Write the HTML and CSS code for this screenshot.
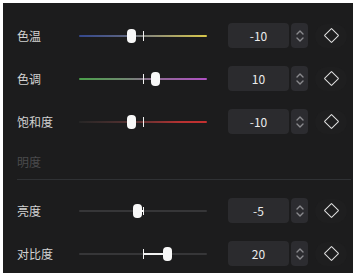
FILE: index.html
```html
<!DOCTYPE html>
<html lang="zh">
<head>
    <meta charset="UTF-8">
    <title>调色</title>
    <link rel="stylesheet" href="styles.css">
</head>
<body>
    <div class="panel">
        <!-- 白平衡 -->
        <div class="row">
            <span class="label">色温</span>
            <div class="slider">
                <div class="track temp"></div>
                <div class="tick"></div>
                <div class="thumb" style="left: 48px"></div>
            </div>
            <div class="value">-10</div>
            <div class="stepper">
                <svg width="10" height="16" viewBox="0 0 10 16"><path d="M2 6 L5 3 L8 6 M2 10 L5 13 L8 10" fill="none" stroke="#8a8a8e" stroke-width="1.4" stroke-linecap="round" stroke-linejoin="round"/></svg>
            </div>
            <div class="key"><span class="diamond"></span></div>
        </div>

        <div class="row">
            <span class="label">色调</span>
            <div class="slider">
                <div class="track tint"></div>
                <div class="tick"></div>
                <div class="thumb" style="left: 72px"></div>
            </div>
            <div class="value">10</div>
            <div class="stepper">
                <svg width="10" height="16" viewBox="0 0 10 16"><path d="M2 6 L5 3 L8 6 M2 10 L5 13 L8 10" fill="none" stroke="#8a8a8e" stroke-width="1.4" stroke-linecap="round" stroke-linejoin="round"/></svg>
            </div>
            <div class="key"><span class="diamond"></span></div>
        </div>

        <div class="row">
            <span class="label">饱和度</span>
            <div class="slider">
                <div class="track sat"></div>
                <div class="tick"></div>
                <div class="thumb" style="left: 48px"></div>
            </div>
            <div class="value">-10</div>
            <div class="stepper">
                <svg width="10" height="16" viewBox="0 0 10 16"><path d="M2 6 L5 3 L8 6 M2 10 L5 13 L8 10" fill="none" stroke="#8a8a8e" stroke-width="1.4" stroke-linecap="round" stroke-linejoin="round"/></svg>
            </div>
            <div class="key"><span class="diamond"></span></div>
        </div>

        <!-- 明度 -->
        <div class="section">明度</div>
        <div class="divider"></div>

        <div class="row">
            <span class="label">亮度</span>
            <div class="slider">
                <div class="track plain"></div>
                <div class="tick short"></div>
                <div class="fill" style="left: 58px; width: 6px"></div>
                <div class="thumb" style="left: 54px"></div>
            </div>
            <div class="value">-5</div>
            <div class="stepper">
                <svg width="10" height="16" viewBox="0 0 10 16"><path d="M2 6 L5 3 L8 6 M2 10 L5 13 L8 10" fill="none" stroke="#8a8a8e" stroke-width="1.4" stroke-linecap="round" stroke-linejoin="round"/></svg>
            </div>
            <div class="key"><span class="diamond"></span></div>
        </div>

        <div class="row">
            <span class="label">对比度</span>
            <div class="slider">
                <div class="track plain"></div>
                <div class="tick"></div>
                <div class="fill" style="left: 64px; width: 24px"></div>
                <div class="thumb" style="left: 84px"></div>
            </div>
            <div class="value">20</div>
            <div class="stepper">
                <svg width="10" height="16" viewBox="0 0 10 16"><path d="M2 6 L5 3 L8 6 M2 10 L5 13 L8 10" fill="none" stroke="#8a8a8e" stroke-width="1.4" stroke-linecap="round" stroke-linejoin="round"/></svg>
            </div>
            <div class="key"><span class="diamond"></span></div>
        </div>
    </div>
</body>
</html>
```

FILE: styles.css
```css
body {
    margin: 0;
    background: #ffffff;
    font-family: "Noto Sans CJK SC", "Noto Sans", sans-serif;
}
.panel {
    margin: 3px;
    width: 350px;
    height: 270px;
    box-sizing: border-box;
    padding: 20px 0 0 14px;
    background: #1c1c1d;
}
.row {
    display: flex;
    align-items: center;
    height: 25px;
    margin-bottom: 18px;
}
.row:last-child {
    margin-bottom: 0;
}
.label {
    width: 62px;
    font-size: 12px;
    color: #d2d2d2;
}
.slider {
    position: relative;
    width: 128px;
    height: 25px;
    margin-right: 21px;
}
.track {
    position: absolute;
    left: 0;
    right: 0;
    top: 12px;
    height: 2px;
    border-radius: 1px;
}
.track.temp {
    background: linear-gradient(to right, #34488e, #5a6280 35%, #8a8a7a 55%, #d8c84a);
}
.track.tint {
    background: linear-gradient(to right, #4aa04a, #6e8a6e 35%, #8a6e8e 55%, #b050c4);
}
.track.sat {
    background: linear-gradient(to right, #262626, #5a3232 45%, #b83232 80%, #c43030);
}
.track.plain {
    background: #363638;
}
.tick {
    position: absolute;
    left: 64px;
    top: 8px;
    width: 1px;
    height: 10px;
    background: #f2f2f2;
}
.tick.short {
    top: 9px;
    height: 8px;
}
.fill {
    position: absolute;
    top: 12px;
    height: 2px;
    background: #f2f2f2;
}
.thumb {
    position: absolute;
    top: 6px;
    width: 9px;
    height: 14px;
    border-radius: 4px;
    background: #f8f8f8;
}
.value {
    width: 61px;
    height: 25px;
    line-height: 25px;
    text-align: center;
    border-radius: 4px;
    background: #2b2b2e;
    color: #ececec;
    font-size: 12px;
    margin-right: 2px;
}
.stepper {
    width: 17px;
    height: 25px;
    border-radius: 4px;
    background: #2c2c30;
    display: flex;
    align-items: center;
    justify-content: center;
}
.key {
    width: 32px;
    height: 24px;
    margin-left: 7px;
    border-radius: 12px;
    background: #1e1e1f;
    display: flex;
    align-items: center;
    justify-content: center;
}
.diamond {
    width: 9px;
    height: 9px;
    border: 1.5px solid #e0e0e0;
    border-radius: 1px;
    transform: rotate(45deg);
}
.section {
    margin-top: 20px;
    height: 16px;
    line-height: 16px;
    font-size: 12px;
    color: #4a4a4c;
}
.divider {
    margin-top: 9px;
    width: 334px;
    height: 1px;
    background: #2f3134;
    margin-bottom: 18px;
}
```
